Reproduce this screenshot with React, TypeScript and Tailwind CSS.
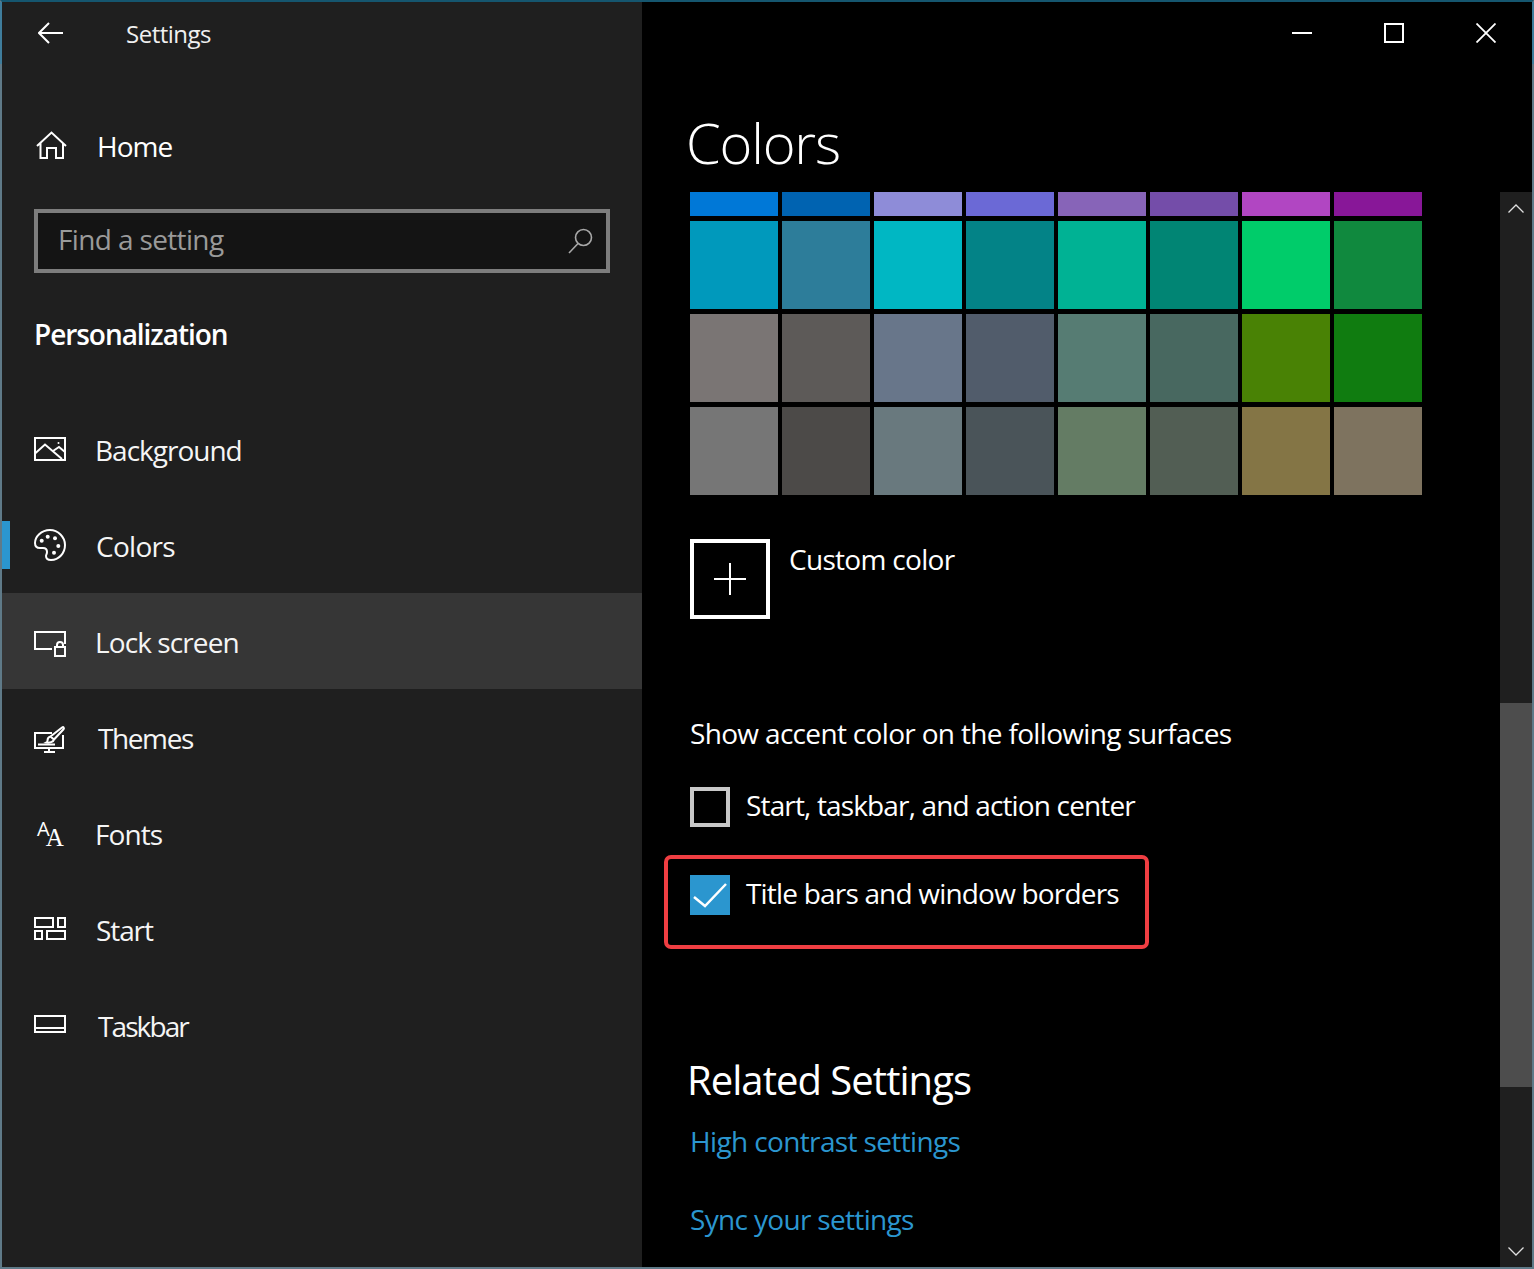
const font = "[font-family:'Open_Sans','Noto_Sans',sans-serif]";

const Ic = ({ children }: { children: React.ReactNode }) => (
  <svg width="32" height="32" viewBox="0 0 32 32" fill="none" stroke="white" strokeWidth="2" className="shrink-0 overflow-visible">
    {children}
  </svg>
);

const rows: { label: string; icon: React.ReactNode; cls: string }[] = [
  {
    label: "Background",
    cls: "ml-[29px] tracking-[-1px]",
    icon: (
      <Ic>
        <rect x="1" y="5" width="30" height="22" />
        <path d="M1 20.5 11 11.5 28 26M19 18l6-4 6 5" />
        <circle cx="24.5" cy="10" r="1" fill="white" stroke="none" />
      </Ic>
    ),
  },
  {
    label: "Colors",
    cls: "ml-[30px] tracking-[-0.7px]",
    icon: (
      <Ic>
        <path d="M16 1C7 1 1 8 1 14c0 3 2 5 5 5h3c3 0 4 2 4 4 0 2-1 3-1 4 0 3 2 4 5 4 8 0 14-7 14-15S24 1 16 1Z" />
        <g fill="white" stroke="none">
          <circle cx="7.7" cy="11.7" r="2" />
          <circle cx="13.7" cy="7.7" r="2" />
          <circle cx="21" cy="9.3" r="2" />
          <circle cx="24.3" cy="17" r="2" />
          <circle cx="20" cy="23.7" r="2" />
        </g>
      </Ic>
    ),
  },
  {
    label: "Lock screen",
    cls: "ml-[29px] tracking-[-0.9px]",
    icon: (
      <Ic>
        <path d="M18 24H1V7h30v12" />
        <rect x="21" y="22" width="10" height="9" />
        <path d="M23 22v-2a3 3 0 0 1 6 0v2" />
      </Ic>
    ),
  },
  {
    label: "Themes",
    cls: "ml-[32px] tracking-[-1.4px]",
    icon: (
      <Ic>
        <path d="M18 12H1v15h28V14M15 27v4M10 31h11M4 23.500h17" />
        <path d="M28 6.500c1.500-1 2.500.500 1.500 1.800L20 18.500l-3.500-3ZM16.500 15.500c-2 .5-3 2-3 4 0 1 0 1.500-1 2 3 .5 7-.5 7.500-3" />
      </Ic>
    ),
  },
  {
    label: "Fonts",
    cls: "ml-[29px] tracking-[-0.9px]",
    icon: (
      <div className="flex w-[32px] h-[32px] shrink-0 text-white pl-[3px]">
        <span className="[font-family:'Open_Sans',sans-serif] font-medium text-[20px] leading-[20px] mt-[2px]">A</span>
        <span className="[font-family:'Liberation_Serif',serif] text-[25px] leading-[25px] mt-[8px] -ml-[4px]">A</span>
      </div>
    ),
  },
  {
    label: "Start",
    cls: "ml-[30px] tracking-[-1.1px]",
    icon: (
      <Ic>
        <rect x="1" y="5" width="18" height="9" />
        <rect x="24" y="5" width="7" height="9" />
        <rect x="1" y="18" width="7" height="8" />
        <rect x="13" y="18" width="18" height="8" />
      </Ic>
    ),
  },
  {
    label: "Taskbar",
    cls: "ml-[32px] tracking-[-1.900px]",
    icon: (
      <Ic>
        <rect x="1" y="7" width="30" height="16" />
        <path d="M1 19h30" />
      </Ic>
    ),
  },
];

const swatches = [
  ["#0078d7", "#0063b1", "#8e8cd8", "#6b69d6", "#8764b8", "#744da9", "#b146c2", "#881798"],
  ["#0099bc", "#2d7d9a", "#00b7c3", "#038387", "#00b294", "#018574", "#00cc6a", "#10893e"],
  ["#7a7574", "#5d5a58", "#68768a", "#515c6b", "#567c73", "#486860", "#498205", "#107c10"],
  ["#767676", "#4c4a48", "#69797e", "#4a5459", "#647c64", "#525e54", "#847545", "#7e735f"],
];

export default function App() {
  return (
    <div className={`${font} relative w-[1534px] h-[1269px] flex bg-black text-white border-2 border-[#5f7a88] border-t-[#15566f]`}>
      <span className="absolute left-[-2px] top-0 w-[2px] h-[62px] bg-[#3f7d9c]" />
      <span className="absolute right-[-2px] top-0 w-[2px] h-[62px] bg-[#3f7d9c]" />
      <aside className="w-[640px] shrink-0 bg-[#1f1f1f] flex flex-col">
        <div className="h-[64px] flex items-center pl-[36px]">
          <svg width="26" height="24" viewBox="0 0 26 24" fill="none" stroke="white" strokeWidth="2" className="-mt-[2px]">
            <path d="M1 12h24M11 2 1 12l10 10" />
          </svg>
          <span className="ml-[62px] text-[24px] tracking-[-0.5px] leading-none text-[#f0f0f0]">Settings</span>
        </div>
        <div className="mt-[33px] h-[96px] flex items-center pl-[32px]">
          <Ic>
            <path d="M3 15 17.500 1.500 32 15M6.500 12v15H13V17h9v10h7V12" />
          </Ic>
          <span className="ml-[31px] -mt-[2px] text-[28px] tracking-[-1px]">Home</span>
        </div>
        <div className="mt-[14px] ml-[32px] w-[576px] h-[64px] border-4 border-[#7d7d7d] bg-[#141414] flex items-center justify-between pl-[20px] pr-[13px]">
          <span className="text-[28px] -mt-[4px] tracking-[-0.64px] text-[#9a9a9a]">Find a setting</span>
          <svg width="26" height="26" viewBox="0 0 26 26" fill="none" stroke="#a8a8a8" strokeWidth="1.600">
            <circle cx="16.500" cy="9.500" r="8" />
            <path d="M11 15.500 2 25" />
          </svg>
        </div>
        <div className="mt-[29px] h-[64px] flex items-center pl-[32px] text-[28px] font-semibold tracking-[-1.050px]">Personalization</div>
        <nav className="mt-[35px] flex flex-col">
          {rows.map((r) => (
            <div key={r.label} className={`relative h-[96px] flex items-center pl-[32px] ${r.label === "Lock screen" ? "bg-[#363636]" : ""}`}>
              {r.icon}
              <span className={`text-[28px] mt-[2px] text-[#f5f5f5] ${r.cls}`}>{r.label}</span>
              {r.label === "Colors" && <span className="absolute left-0 top-[24px] w-[8px] h-[48px] bg-[#2b96cf]" />}
            </div>
          ))}
        </nav>
      </aside>

      <main className="flex-1 flex flex-col min-w-0">
        <div className="h-[64px] flex justify-end shrink-0">
          {[
            <path key="m" d="M0 10h20" strokeWidth="2" />,
            <rect key="x" x="1" y="1" width="18" height="18" strokeWidth="2" />,
            <path key="c" d="M0.500 0.500l19 19M19.500 0.500l-19 19" strokeWidth="1.800" />,
          ].map((p, i) => (
            <div key={i} className="w-[92px] h-[62px] flex items-center justify-center">
              <svg width="20" height="20" viewBox="0 0 20 20" fill="none" stroke="white">{p}</svg>
            </div>
          ))}
        </div>
        <h1 className="h-[126px] shrink-0 pl-[44px] pt-[38px] text-[56px] font-light leading-[76px] tracking-[-1.200px]">Colors</h1>
        <div className="flex-1 flex min-h-0">
          <div className="flex-1 pl-[48px] overflow-hidden text-[28px]">
            <div className="flex flex-col gap-[5px] w-[732px]">
              {swatches.map((row, i) => (
                <div key={i} className={`grid grid-cols-8 gap-[4px] ${i === 0 ? "h-[24px]" : "h-[88px]"}`}>
                  {row.map((c) => (
                    <div key={c} className="h-full" style={{ backgroundColor: c }} />
                  ))}
                </div>
              ))}
            </div>
            <div className="mt-[44px] flex items-start gap-[20px]">
              <div className="w-[80px] h-[80px] border-4 border-white flex items-center justify-center">
                <svg width="32" height="32" viewBox="0 0 32 32" stroke="white" strokeWidth="2">
                  <path d="M0 16h32M16 0v32" />
                </svg>
              </div>
              <span className="-ml-[1px] leading-[40px] tracking-[-0.7px]">Custom color</span>
            </div>
            <div className="mt-[93px] h-[42px] leading-[42px] tracking-[-0.67px]">Show accent color on the following surfaces</div>
            <div className="mt-[33px] flex items-center gap-[16px] h-[40px]">
              <div className="w-[40px] h-[40px] border-4 border-[#c8c8c8]" />
              <span className="-mt-[4px] tracking-[-0.85px]">Start, taskbar, and action center</span>
            </div>
            <div className="relative mt-[48px] flex items-center gap-[16px] h-[40px]">
              <div className="w-[40px] h-[40px] bg-[#2b96cf] flex items-center justify-center">
                <svg width="34" height="26" viewBox="0 0 34 26" fill="none" stroke="white" strokeWidth="2.500">
                  <path d="M1 15 12 24 33 2" />
                </svg>
              </div>
              <span className="-mt-[4px] tracking-[-0.81px]">Title bars and window borders</span>
              <div className="absolute left-[-26px] top-[-20px] w-[485px] h-[94px] border-4 border-[#ef3e42] rounded-[7px]" />
            </div>
            <h2 className="mt-[139px] -ml-[3px] text-[40px] leading-[52px] tracking-[-0.96px]">Related Settings</h2>
            <div className="mt-[14px] text-[#2b96cf] leading-[42px] tracking-[-0.63px]">High contrast settings</div>
            <div className="mt-[36px] text-[#2b96cf] leading-[42px] tracking-[-0.67px]">Sync your settings</div>
          </div>
          <div className="w-[32px] shrink-0 bg-[#1f1f1f] flex flex-col">
            <div className="h-[32px] flex items-center justify-center">
              <svg width="16" height="9" viewBox="0 0 16 9" fill="none" stroke="#e0e0e0" strokeWidth="1.300"><path d="M0.500 8.500 8 1l7.500 7.500" /></svg>
            </div>
            <div className="h-[479px]" />
            <div className="h-[384px] bg-[#4d4d4d]" />
            <div className="flex-1" />
            <div className="h-[32px] flex items-center justify-center">
              <svg width="16" height="9" viewBox="0 0 16 9" fill="none" stroke="#e0e0e0" strokeWidth="1.300"><path d="M0.500 0.500 8 8l7.500-7.500" /></svg>
            </div>
          </div>
        </div>
      </main>
    </div>
  );
}
